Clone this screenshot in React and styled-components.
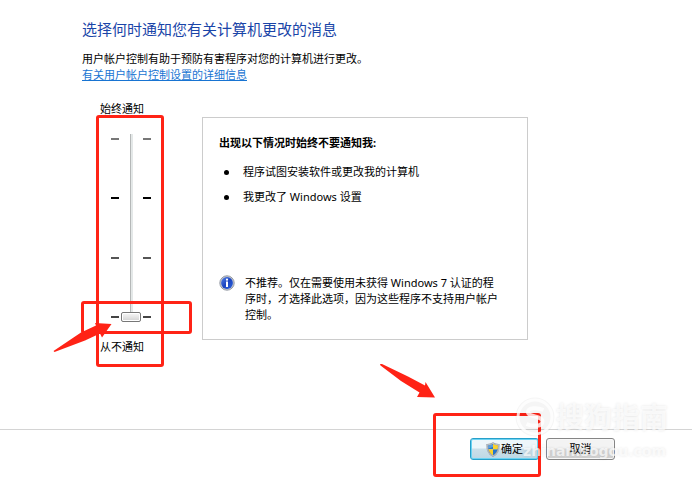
import styled, { createGlobalStyle, css } from 'styled-components';

const GlobalStyle = createGlobalStyle`
	* {
		box-sizing: border-box;
	}
	body {
		margin: 0;
		background: #fff;
		color: #000;
		font-family: "Noto Sans", "Noto Sans CJK SC", sans-serif;
		font-size: 11px;
		line-height: 16px;
	}
`;

const Page = styled.div`
	min-height: 100vh;
	overflow: hidden;
`;

const Content = styled.main`
	padding: 18px 24px 74px 82px;
`;

const Title = styled.h1`
	margin: 0 0 11px;
	color: #1a45a8;
	font-size: 15px;
	font-weight: 400;
	line-height: 22px;
`;

const Intro = styled.p`
	margin: 0;
`;

const DetailsLink = styled.a`
	display: inline-block;
	color: #1874d2;
	text-decoration: underline;
`;

const Settings = styled.div`
	display: flex;
	align-items: flex-start;
	margin-top: 18px;
`;

const SliderColumn = styled.div`
	position: relative;
	display: flex;
	flex: none;
	flex-direction: column;
	align-items: flex-start;
	gap: 17px;
	width: 120px;
	padding-left: 18px;
`;

const SliderTrack = styled.div`
	display: flex;
	gap: 2px;
	height: 188px;
	margin-left: 11px;
`;

const Ticks = styled.div`
	display: flex;
	flex-direction: column;
	justify-content: space-between;
	width: 8px;
	padding: 4px 0;
`;

const Tick = styled.span`
	height: 2px;
	background: ${({ $tone }) => $tone};
`;

const thumb = css`
	width: 20px;
	height: 10px;
	border: 1px solid #777;
	border-radius: 2px;
	background: linear-gradient(#f8f8f8, #d2d2d2);
	box-shadow: inset 0 0 0 1px #fff;
`;

const Slider = styled.input`
	appearance: none;
	width: 20px;
	height: 188px;
	margin: 0;
	background: linear-gradient(90deg, #b5b8b8 1px, #e4e8e8 1px) center / 3px 100% no-repeat;
	direction: rtl;
	writing-mode: vertical-lr;

	&::-webkit-slider-thumb {
		appearance: none;
		${thumb}
	}
	&::-moz-range-thumb {
		${thumb}
	}
`;

const Panel = styled.section`
	flex: 1;
	max-width: 326px;
	min-height: 223px;
	margin-top: 16px;
	padding: 17px 24px 16px 16px;
	border: 1px solid #ccc;
`;

const PanelTitle = styled.h2`
	margin: 0;
	font-size: 11px;
	font-weight: 700;
	line-height: 16px;
`;

const Reasons = styled.ul`
	display: flex;
	flex-direction: column;
	gap: 9px;
	margin: 13px 0 70px;
	padding: 0;
	list-style: none;
`;

const Reason = styled.li`
	display: flex;
	align-items: center;
	gap: 14px;
	padding-left: 5px;

	&::before {
		content: "";
		width: 5px;
		height: 5px;
		border-radius: 50%;
		background: #000;
	}
`;

const Advice = styled.div`
	display: flex;
	gap: 10px;

	svg {
		flex: none;
	}
	p {
		margin: 0;
	}
`;

const Footer = styled.footer`
	display: flex;
	justify-content: flex-end;
	padding: 8px 77px 24px;
	border-top: 1px solid #d4d4d4;
`;

const Actions = styled.div`
	position: relative;
	display: flex;
	gap: 7px;
`;

const Button = styled.button`
	display: flex;
	align-items: center;
	justify-content: center;
	gap: 1px;
	width: 69px;
	height: 22px;
	padding: 0;
	border: 1px solid ${({ $primary }) => ($primary ? '#279fc9' : '#858585')};
	border-radius: 3px;
	background: ${({ $primary }) =>
		$primary
			? 'linear-gradient(#edf6fa 45%, #cbdfe9 50%, #bdd8e5)'
			: 'linear-gradient(#f3f3f3 45%, #dedede 50%, #cfcfcf)'};
	box-shadow: inset 0 0 0 1px ${({ $primary }) => ($primary ? '#6bd3f3' : '#f8f8f8')};
	color: #000;
	font: inherit;
`;

const Highlight = styled.div`
	position: absolute;
	top: ${({ $top }) => $top}px;
	left: ${({ $left }) => $left}px;
	width: ${({ $width }) => $width}px;
	height: ${({ $height }) => $height}px;
	border: 3px solid #ff2316;
	border-radius: 3px;
	pointer-events: none;
`;

const Arrow = styled.svg`
	position: absolute;
	top: ${({ $top }) => $top}px;
	left: ${({ $left }) => $left}px;
	fill: #ff2316;
	pointer-events: none;
`;

const Watermark = styled.div`
	position: absolute;
	top: -41px;
	left: 45px;
	color: rgba(255, 255, 255, 0.7);
	text-shadow: 0 0 3px rgba(0, 0, 0, 0.1);
	white-space: nowrap;
	pointer-events: none;
`;

const WatermarkBrand = styled.div`
	display: flex;
	align-items: center;
	gap: 1px;
	height: 40px;
	font-size: 28px;
	font-weight: 700;
`;

const WatermarkSite = styled.div`
	margin-top: 4px;
	padding-left: 8px;
	font-family: "DejaVu Sans", sans-serif;
	font-size: 14px;
	font-weight: 700;
	line-height: 20px;
`;

const InfoIcon = () => (
	<svg width="16" height="16" viewBox="0 0 16 16" aria-hidden="true">
		<defs>
			<linearGradient id="info-fill" x1="0" y1="0" x2="1" y2="1">
				<stop offset="0" stopColor="#5583e6" />
				<stop offset="0.5" stopColor="#1c44c0" />
				<stop offset="1" stopColor="#2d63dc" />
			</linearGradient>
		</defs>
		<circle cx="8" cy="8" r="7.2" fill="#c3c8d2" stroke="#969ba5" />
		<circle cx="8" cy="8" r="5.9" fill="url(#info-fill)" />
		<circle cx="8" cy="4.7" r="1.1" fill="#fff" />
		<path d="M7 6.6h2v5.4H7z" fill="#fff" />
	</svg>
);

const shieldPath = 'M7 1.2C8.5 2.3 10.5 2.7 12.8 2.7C13 8 11.7 11.6 7 14C2.3 11.6 1 8 1.2 2.7C3.5 2.7 5.5 2.3 7 1.2Z';

const ShieldIcon = () => (
	<svg width="14" height="15" viewBox="0 0 14 15" aria-hidden="true">
		<clipPath id="shield">
			<path d={shieldPath} />
		</clipPath>
		<g clipPath="url(#shield)">
			<path d="M0 0h7v7.3H0zM7 7.3h7V15H7z" fill="#2475cc" />
			<path d="M7 0h7v7.3H7zM0 7.3h7V15H0z" fill="#fbd22c" />
			<path d="M1 2.5h6V5L1 7z" fill="#7fb9ea" opacity="0.6" />
		</g>
		<path d={shieldPath} fill="none" stroke="#8d959c" strokeWidth="1.6" />
		<path d={shieldPath} fill="none" stroke="#d9dee2" strokeWidth="0.6" />
	</svg>
);

const BrandIcon = () => (
	<svg width="40" height="40" viewBox="0 0 40 40" fill="none" aria-hidden="true">
		<circle cx="20" cy="20" r="19.5" fill="#000" fillOpacity="0.04" />
		<g stroke="#fff" strokeOpacity="0.8">
			<circle cx="20" cy="20" r="17" strokeWidth="3" />
			<path
				d="M28.5 13C23 10.5 13 10 13 15C13 20.5 27.5 18.5 27.5 24.5C27.5 30 17 29.5 11.5 27"
				strokeWidth="4"
			/>
		</g>
	</svg>
);

const tickTones = ['#777', '#000', '#555', '#444'];

const TickMarks = () => (
	<Ticks aria-hidden="true">
		{tickTones.map((tone) => (
			<Tick key={tone} $tone={tone} />
		))}
	</Ticks>
);

const NotifySlider = () => (
	<SliderColumn>
		<label htmlFor="notify-level">始终通知</label>
		<SliderTrack>
			<TickMarks />
			<Slider id="notify-level" type="range" min="0" max="3" step="1" defaultValue="0" />
			<TickMarks />
		</SliderTrack>
		<label htmlFor="notify-level">从不通知</label>
		<Highlight $top={14} $left={14} $width={68} $height={252} />
		<Highlight $top={200} $left={-1} $width={111} $height={33} />
		<Arrow $top={220} $left={-29} width="60" height="32" viewBox="0 0 60 32">
			<path d="M0.5 30L28 11.5L43 4.5L42 2L58.5 3L49 16.5L47 12.5L32 19.5L1.5 31Z" />
		</Arrow>
	</SliderColumn>
);

const App = () => (
	<Page>
		<GlobalStyle />
		<Content>
			<Title>选择何时通知您有关计算机更改的消息</Title>
			<Intro>用户帐户控制有助于预防有害程序对您的计算机进行更改。</Intro>
			<DetailsLink href="#details">有关用户帐户控制设置的详细信息</DetailsLink>
			<Settings>
				<NotifySlider />
				<Panel>
					<PanelTitle>出现以下情况时始终不要通知我:</PanelTitle>
					<Reasons>
						<Reason>程序试图安装软件或更改我的计算机</Reason>
						<Reason>我更改了 Windows 设置</Reason>
					</Reasons>
					<Advice>
						<InfoIcon />
						<p>不推荐。仅在需要使用未获得 Windows 7 认证的程序时，才选择此选项，因为这些程序不支持用户帐户控制。</p>
					</Advice>
				</Panel>
			</Settings>
		</Content>
		<Footer>
			<Actions>
				<Button type="button" $primary>
					<ShieldIcon />
					确定
				</Button>
				<Button type="button">取消</Button>
				<Highlight $top={-25} $left={-37} $width={108} $height={64} />
				<Arrow $top={-75} $left={-91} width="58" height="36" viewBox="0 0 58 36">
					<path d="M1 1L3 1L29 13.5L46 22.5L46.5 19L56 34.5L38 34L40.5 29.5L22 18L1.5 2.5Z" />
				</Arrow>
				<Watermark aria-hidden="true">
					<WatermarkBrand>
						<BrandIcon />
						搜狗指南
					</WatermarkBrand>
					<WatermarkSite>zhinan.sogou.com</WatermarkSite>
				</Watermark>
			</Actions>
		</Footer>
	</Page>
);

export default App;
